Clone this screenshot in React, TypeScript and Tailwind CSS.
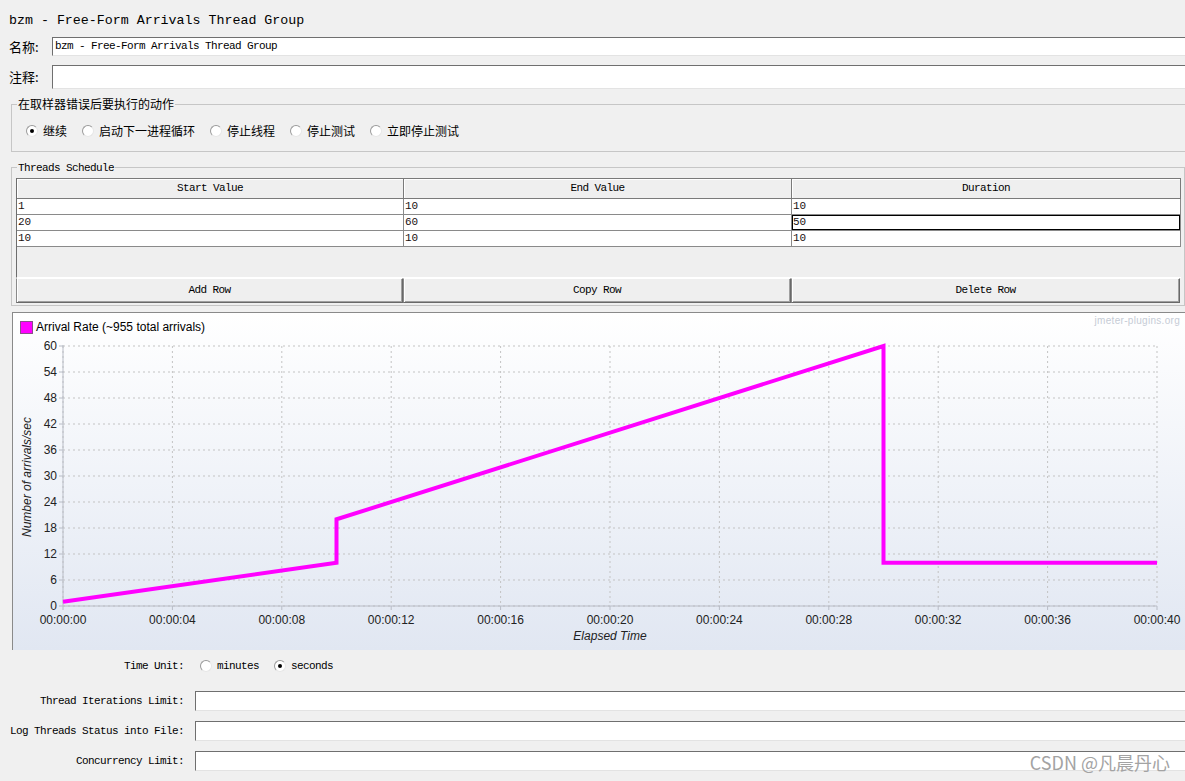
import React from "react";

const X0 = 50;
const X1 = 1144;
const Y0 = 269;
const Y1 = 9;
const sx = (t: number) => X0 + (t / 40) * (X1 - X0);
const sy = (v: number) => Y0 - (v / 60) * (Y0 - Y1);
const xTicks = Array.from({ length: 11 }, (_, i) => i * 4);
const yTicks = Array.from({ length: 11 }, (_, i) => i * 6);
const fmt = (s: number) => `00:00:${String(s).padStart(2, "0")}`;
const series = [
  [0, 1],
  [10, 10],
  [10, 20],
  [30, 60],
  [30, 10],
  [40, 10],
];

const rows = [
  ["1", "10", "10"],
  ["20", "60", "50"],
  ["10", "10", "10"],
];

const Radio = ({ checked }: { checked?: boolean }) => (
  <span className="w-[12px] h-[12px] shrink-0 rounded-full border border-t-[#9a9a9a] border-l-[#9a9a9a] border-b-[#e6e6e6] border-r-[#e6e6e6] bg-white flex items-center justify-center">
    {checked && <span className="w-[4px] h-[4px] rounded-full bg-black" />}
  </span>
);

const Field = ({ children }: { children?: React.ReactNode }) => (
  <div className="w-[1200px] h-full shrink-0 bg-white border border-t-[#6f6f6f] border-l-[#6f6f6f] border-b-[#e3e3e3] border-r-[#e3e3e3] pl-[2px] flex items-center text-[11px] tracking-[-0.6px]">
    {children}
  </div>
);

function Chart() {
  return (
    <svg width={1172} height={313} className="block" fontFamily="'Liberation Sans', Arial, sans-serif">
      {xTicks.map((t) => (
        <line key={"gx" + t} x1={sx(t)} x2={sx(t)} y1={Y1} y2={Y0} stroke="#c3c3c3" strokeDasharray="2 3" />
      ))}
      {yTicks.map((v) => (
        <line key={"gy" + v} x1={X0} x2={X1} y1={sy(v)} y2={sy(v)} stroke="#c3c3c3" strokeDasharray="2 3" />
      ))}
      <line x1={X0} x2={X0} y1={Y1 - 1} y2={Y0} stroke="#b8bcc6" />
      <line x1={X0} x2={X1} y1={Y0} y2={Y0} stroke="#b8bcc6" />
      {yTicks.map((v) => (
        <g key={"ty" + v}>
          <line x1={X0 - 4} x2={X0} y1={sy(v)} y2={sy(v)} stroke="#b8bcc6" />
          <text x={44} y={sy(v) + 4} fontSize={12} textAnchor="end" fill="#222">
            {v}
          </text>
        </g>
      ))}
      {xTicks.map((t) => (
        <g key={"tx" + t}>
          <line x1={sx(t)} x2={sx(t)} y1={Y0} y2={Y0 + 4} stroke="#b8bcc6" />
          <text x={sx(t)} y={287} fontSize={12} textAnchor="middle" fill="#222">
            {fmt(t)}
          </text>
        </g>
      ))}
      <polyline
        points={series.map(([t, v]) => `${sx(t)},${sy(v)}`).join(" ")}
        fill="none"
        stroke="#ff00ff"
        strokeWidth={4}
        strokeLinejoin="miter"
      />
      <text x={597} y={303} fontSize={12} fontStyle="italic" textAnchor="middle" fill="#222">
        Elapsed Time
      </text>
      <text transform="translate(18,140) rotate(-90)" fontSize={12} fontStyle="italic" textAnchor="middle" fill="#222">
        Number of arrivals/sec
      </text>
    </svg>
  );
}

export default function App() {
  return (
    <div className="relative w-[1185px] h-[781px] overflow-hidden bg-[#f0f0f0] text-black font-['Liberation_Mono','Noto_Sans_CJK_SC',monospace]">
      <div className="pl-[9px] pt-[12px] h-[30px] leading-[18px] text-[13.3px]">bzm - Free-Form Arrivals Thread Group</div>

      <div className="flex items-center mt-[7px] h-[19px]">
        <span className="w-[52px] shrink-0 pl-[9px] text-[13px] leading-[19px] font-['Noto_Sans_CJK_SC',sans-serif]">名称:</span>
        <Field>bzm - Free-Form Arrivals Thread Group</Field>
      </div>
      <div className="flex items-center mt-[9px] h-[24px]">
        <span className="w-[52px] shrink-0 pl-[9px] text-[13px] leading-[24px] font-['Noto_Sans_CJK_SC',sans-serif]">注释:</span>
        <Field />
      </div>

      <fieldset className="ml-[11px] mt-[7px] w-[1180px] border border-[#c6c6c6] px-0 pb-[12px]">
        <legend className="ml-[5px] px-[1px] text-[12px] leading-[16px] font-['Noto_Sans_CJK_SC',sans-serif]">在取样器错误后要执行的动作</legend>
        <div className="mt-[11px] h-[16px] pl-[14px] flex items-center gap-[15px] text-[12px] font-['Noto_Sans_CJK_SC',sans-serif]">
          {[
            ["继续", true],
            ["启动下一进程循环", false],
            ["停止线程", false],
            ["停止测试", false],
            ["立即停止测试", false],
          ].map(([label, checked]) => (
            <div key={label as string} className="flex items-center gap-[5px]">
              <Radio checked={checked as boolean} />
              <span>{label as string}</span>
            </div>
          ))}
        </div>
      </fieldset>

      <fieldset className="ml-[11px] mt-[8px] w-[1173px] border border-[#c6c6c6] pl-[4px] pr-[3px] pb-[2px]">
        <legend className="ml-[1px] px-[1px] text-[11px] tracking-[-0.6px] leading-[14px]">
          <span className="relative top-[1px]">Threads Schedule</span>
        </legend>
        <div className="mt-[4px] h-[100px] border-l border-[#6d6d6d] border-b border-b-white bg-[#efefef]">
          <div className="grid grid-cols-[387px_388px_389px] h-[21px]">
            {["Start Value", "End Value", "Duration"].map((h) => (
              <div
                key={h}
                className="border-t border-b border-r border-[#7a7a7a] bg-[#efefef] shadow-[inset_1px_1px_0_#ffffff] flex items-center justify-center text-[11px] tracking-[-0.6px]"
              >
                {h}
              </div>
            ))}
          </div>
          {rows.map((r, i) => (
            <div key={i} className="grid grid-cols-[387px_388px_389px] h-[16px]">
              {r.map((c, j) => (
                <div
                  key={j}
                  className={
                    i === 1 && j === 2
                      ? "bg-white border-r border-b border-[#8a8a8a] shadow-[inset_0_0_0_1px_#000000] pl-[1px] text-[11px] leading-[15px] text-[#1a1010]"
                      : "bg-white border-r border-b border-[#8a8a8a] pl-[1px] text-[11px] leading-[15px] text-[#1a1010]"
                  }
                >
                  {c}
                </div>
              ))}
            </div>
          ))}
        </div>
        <div className="grid grid-cols-[387px_388px_389px] h-[25px]">
          {["Add Row", "Copy Row", "Delete Row"].map((b) => (
            <div
              key={b}
              className="bg-[#efefef] border border-t-white border-l-[#8a8a8a] border-b-[#696969] border-r-[#696969] shadow-[inset_1px_0_0_#ffffff,inset_-1px_-1px_0_#a0a0a0] flex items-center justify-center text-[11px] tracking-[-0.6px]"
            >
              {b}
            </div>
          ))}
        </div>
      </fieldset>

      <div className="ml-[12px] mt-[6px] w-[1173px] h-[338px] border-t border-l border-[#8a8a8a] bg-linear-to-b from-white to-[#e1e7f2] flex flex-col">
        <div className="h-[24px] flex items-start">
          <div className="pl-[7px] pt-[8px] flex items-center gap-[3px]">
            <span className="w-[13px] h-[13px] bg-[#ff00ff] border border-[#8a4f8a]" />
            <span className="text-[12px] leading-[13px] font-['Liberation_Sans',Arial,sans-serif]">Arrival Rate (~955 total arrivals)</span>
          </div>
          <span className="ml-auto pr-[5px] pt-[2px] text-[10px] leading-[12px] tracking-[0.3px] text-[#c6ccd6] font-['Liberation_Sans',Arial,sans-serif]">
            jmeter-plugins.org
          </span>
        </div>
        <Chart />
      </div>

      <div className="mt-[8px] h-[16px] flex items-center text-[11px] tracking-[-0.6px]">
        <span className="w-[184px] shrink-0 whitespace-nowrap text-right">Time Unit:</span>
        <div className="ml-[16px] flex items-center gap-[5px]">
          <Radio />
          <span>minutes</span>
        </div>
        <div className="ml-[15px] flex items-center gap-[5px]">
          <Radio checked />
          <span>seconds</span>
        </div>
      </div>

      {["Thread Iterations Limit:", "Log Threads Status into File:", "Concurrency Limit:"].map((l, i) => (
        <div
          key={l}
          className={
            i === 0
              ? "mt-[17px] h-[20px] flex items-center text-[11px] tracking-[-0.6px]"
              : "mt-[10px] h-[20px] flex items-center text-[11px] tracking-[-0.6px]"
          }
        >
          <span className="w-[184px] shrink-0 whitespace-nowrap text-right">{l}</span>
          <div className="ml-[11px] h-full">
            <Field />
          </div>
        </div>
      ))}

      <div className="absolute right-[15px] bottom-[7px] text-[18px] leading-[24px] text-[#a3a3a3] font-['Noto_Sans_CJK_SC',sans-serif]">
        CSDN @凡晨丹心
      </div>
    </div>
  );
}
